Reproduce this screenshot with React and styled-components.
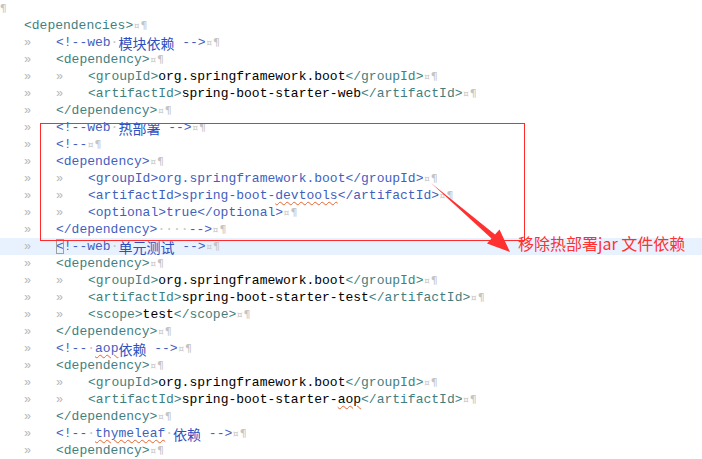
import styled, { createGlobalStyle } from "styled-components";

const GlobalStyle = createGlobalStyle`
  html, body {
    margin: 0;
    padding: 0;
    background: #ffffff;
  }
`;

const Editor = styled.div`
  position: relative;
  width: 702px;
  height: 459px;
  overflow: hidden;
  background: #ffffff;
  font-family: "Liberation Mono", "Courier New", monospace;
  font-size: 13px;
`;

const Line = styled.div`
  display: flex;
  align-items: center;
  height: 17px;
  padding-left: ${(p) => (p.$lead ? "24px" : "0")};
  white-space: pre;
  background: ${(p) => (p.$active ? "#e8f2fe" : "transparent")};
`;

const Tab = styled.span`
  display: inline-block;
  width: 32px;
  color: #b8b8b8;
  font-size: 12px;
`;

const Tag = styled.span`
  color: #3f7f7f;
`;

const Comment = styled.span`
  color: #3f5fbf;
`;

const Text = styled.span`
  color: #000000;
`;

const Ws = styled.span`
  color: #c4c4c4;
`;

const EndMark = styled.span`
  color: #c4c4c4;
  font-family: "DejaVu Sans Mono", monospace;
  font-size: 11px;
  letter-spacing: 1px;
`;

const Cjk = styled.span`
  font-family: "Noto Sans CJK SC", "Noto Sans", sans-serif;
  font-size: 14px;
  color: #2f4fbf;
`;

const Squiggle = styled.span`
  text-decoration: underline wavy #e8642c;
  text-decoration-thickness: 1px;
  text-underline-offset: 2px;
`;

const MatchBox = styled.span`
  outline: 1px solid #a0a0a0;
  outline-offset: -1px;
`;

const Marker = () => <EndMark>¤¶</EndMark>;

const Tabs = ({ n }) =>
  Array.from({ length: n }, (_, i) => <Tab key={i}>»</Tab>);

const Row = ({ tabs = 0, active, children }) => (
  <Line $lead $active={active}>
    <Tabs n={tabs} />
    {children}
    <Marker />
  </Line>
);

const Highlight = styled.div`
  position: absolute;
  left: 40px;
  top: 123px;
  width: 483px;
  height: 116px;
  border: 1px solid #ff2b2b;
  pointer-events: none;
`;

const Arrow = styled.svg`
  position: absolute;
  left: 0;
  top: 0;
  pointer-events: none;
`;

const Callout = styled.div`
  position: absolute;
  left: 518px;
  top: 234px;
  font-family: "Noto Sans CJK SC", "Noto Sans", sans-serif;
  font-size: 16px;
  line-height: 19px;
  color: #ff3030;
  white-space: nowrap;
`;

const groupRow = (tabs, Wrap, Body) => (
  <Row tabs={tabs}>
    <Wrap>&lt;groupId&gt;</Wrap>
    <Body>org.springframework.boot</Body>
    <Wrap>&lt;/groupId&gt;</Wrap>
  </Row>
);

export default function App() {
  return (
    <>
      <GlobalStyle />
      <Editor>
        <Line>
          <EndMark>¶</EndMark>
        </Line>
        <Row>
          <Tag>&lt;dependencies&gt;</Tag>
        </Row>
        <Row tabs={1}>
          <Comment>&lt;!--web</Comment>
          <Ws>·</Ws>
          <Cjk>模块依赖</Cjk>
          <Comment> --&gt;</Comment>
        </Row>
        <Row tabs={1}>
          <Tag>&lt;dependency&gt;</Tag>
        </Row>
        {groupRow(2, Tag, Text)}
        <Row tabs={2}>
          <Tag>&lt;artifactId&gt;</Tag>
          <Text>spring-boot-starter-web</Text>
          <Tag>&lt;/artifactId&gt;</Tag>
        </Row>
        <Row tabs={1}>
          <Tag>&lt;/dependency&gt;</Tag>
        </Row>
        <Row tabs={1}>
          <Comment>&lt;!--web</Comment>
          <Ws>·</Ws>
          <Cjk>热部署</Cjk>
          <Comment> --&gt;</Comment>
        </Row>
        <Row tabs={1}>
          <Comment>&lt;!--</Comment>
        </Row>
        <Row tabs={1}>
          <Comment>&lt;dependency&gt;</Comment>
        </Row>
        {groupRow(2, Comment, Comment)}
        <Row tabs={2}>
          <Comment>
            &lt;artifactId&gt;spring-boot-<Squiggle>devtools</Squiggle>
            &lt;/artifactId&gt;
          </Comment>
        </Row>
        <Row tabs={2}>
          <Comment>&lt;optional&gt;true&lt;/optional&gt;</Comment>
        </Row>
        <Row tabs={1}>
          <Comment>&lt;/dependency&gt;</Comment>
          <Ws>····</Ws>
          <Comment>--&gt;</Comment>
        </Row>
        <Row tabs={1} active>
          <Comment>
            <MatchBox>&lt;</MatchBox>!--web
          </Comment>
          <Ws>·</Ws>
          <Cjk>单元测试</Cjk>
          <Comment> --&gt;</Comment>
        </Row>
        <Row tabs={1}>
          <Tag>&lt;dependency&gt;</Tag>
        </Row>
        {groupRow(2, Tag, Text)}
        <Row tabs={2}>
          <Tag>&lt;artifactId&gt;</Tag>
          <Text>spring-boot-starter-test</Text>
          <Tag>&lt;/artifactId&gt;</Tag>
        </Row>
        <Row tabs={2}>
          <Tag>&lt;scope&gt;</Tag>
          <Text>test</Text>
          <Tag>&lt;/scope&gt;</Tag>
        </Row>
        <Row tabs={1}>
          <Tag>&lt;/dependency&gt;</Tag>
        </Row>
        <Row tabs={1}>
          <Comment>&lt;!--</Comment>
          <Ws>·</Ws>
          <Comment>
            <Squiggle>aop</Squiggle>
          </Comment>
          <Cjk>依赖</Cjk>
          <Comment> --&gt;</Comment>
        </Row>
        <Row tabs={1}>
          <Tag>&lt;dependency&gt;</Tag>
        </Row>
        {groupRow(2, Tag, Text)}
        <Row tabs={2}>
          <Tag>&lt;artifactId&gt;</Tag>
          <Text>
            spring-boot-starter-<Squiggle>aop</Squiggle>
          </Text>
          <Tag>&lt;/artifactId&gt;</Tag>
        </Row>
        <Row tabs={1}>
          <Tag>&lt;/dependency&gt;</Tag>
        </Row>
        <Row tabs={1}>
          <Comment>&lt;!--</Comment>
          <Ws>·</Ws>
          <Comment>
            <Squiggle>thymeleaf</Squiggle>
          </Comment>
          <Ws>·</Ws>
          <Cjk>依赖</Cjk>
          <Comment> --&gt;</Comment>
        </Row>
        <Row tabs={1}>
          <Tag>&lt;dependency&gt;</Tag>
        </Row>

        <Highlight />
        <Arrow width="702" height="459" viewBox="0 0 702 459">
          <polygon
            points="431,183 495,234.5 499.5,229.5 510,252 487,243.5 491.5,238.5"
            fill="#ff3030"
          />
        </Arrow>
        <Callout>移除热部署jar 文件依赖</Callout>
      </Editor>
    </>
  );
}
